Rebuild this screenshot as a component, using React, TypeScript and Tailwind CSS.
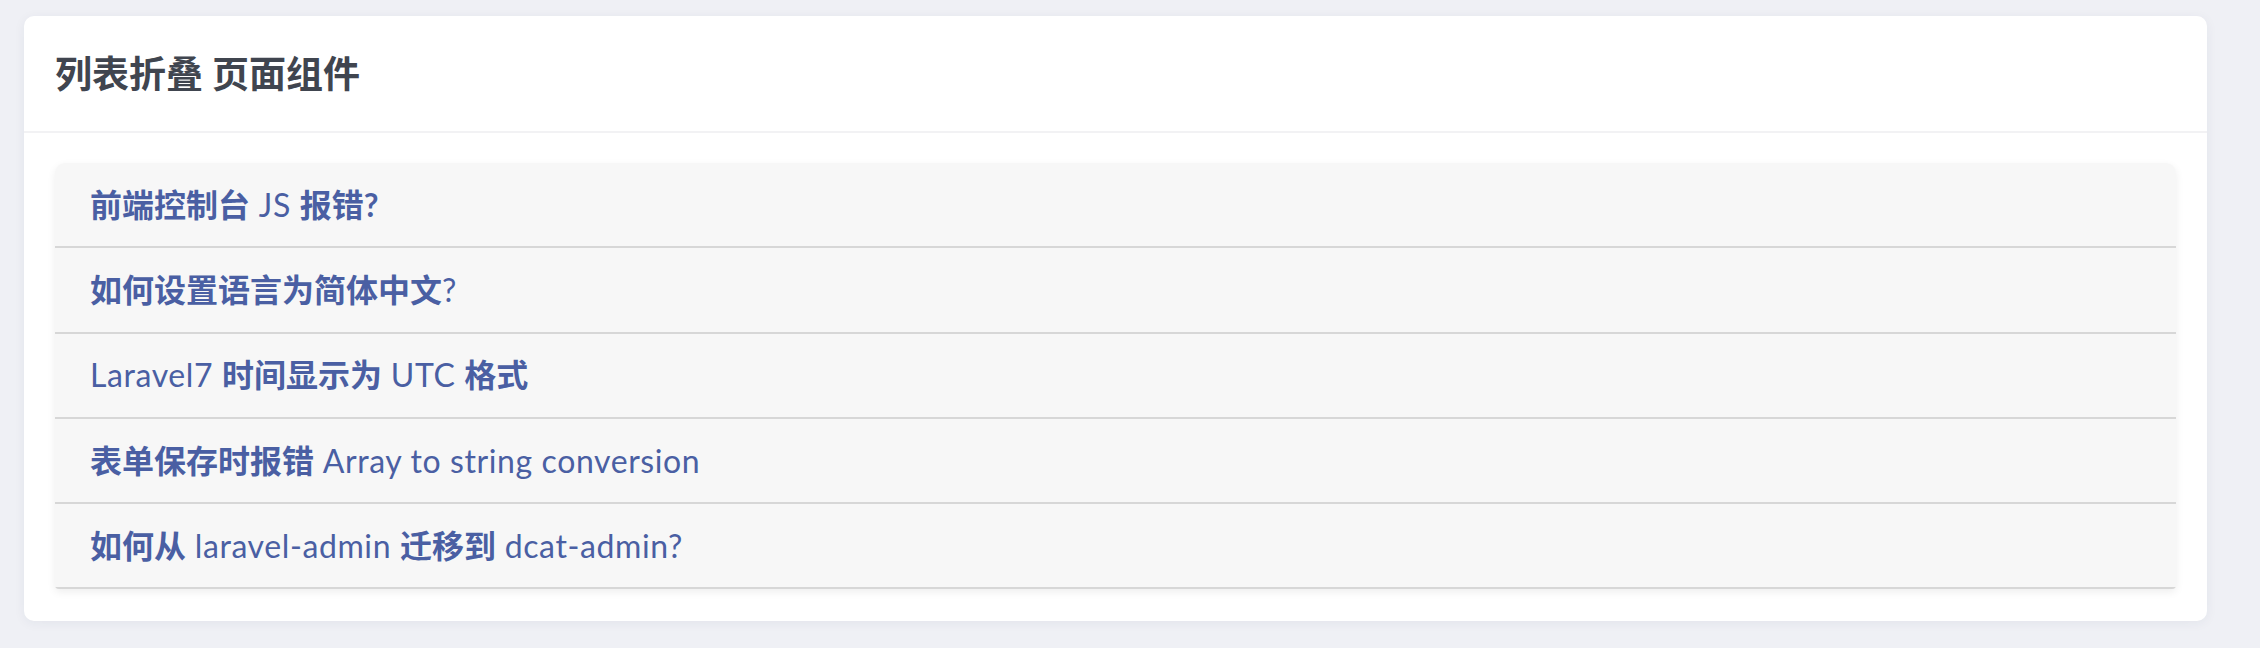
const FONT = '"Lato", "Noto Sans CJK SC", sans-serif';

type Seg = { t: string; b?: boolean };

const ROWS: Seg[][] = [
  [{ t: "前端控制台", b: true }, { t: " JS " }, { t: "报错?", b: true }],
  [{ t: "如何设置语言为简体中文", b: true }, { t: "?" }],
  [{ t: "Laravel7 " }, { t: "时间显示为", b: true }, { t: " UTC " }, { t: "格式", b: true }],
  [{ t: "表单保存时报错", b: true }, { t: " Array to string conversion" }],
  [{ t: "如何从", b: true }, { t: " laravel-admin " }, { t: "迁移到", b: true }, { t: " dcat-admin?" }],
];

export default function App() {
  return (
    <div className="min-h-screen bg-[#eff0f5] pt-[16px] pb-[26px]" style={{ fontFamily: FONT }}>
      <div className="ml-[24px] mr-[53px] rounded-[10px] bg-white shadow-[0_2px_12px_rgba(40,45,80,0.06)]">
        {/* header */}
        <div className="flex h-[117px] items-center border-b-2 border-[#f2f2f4] pl-[31px]">
          <h1 className="text-[37px] font-bold leading-none text-[#40454f]">列表折叠 页面组件</h1>
        </div>

        {/* body */}
        <div className="px-[31px] pt-[30px] pb-[32px]">
          <div className="overflow-hidden rounded-t-[10px] rounded-b-[4px] bg-[#f7f7f7] shadow-[0_3px_8px_rgba(0,0,0,0.07)]">
            {ROWS.map((row, i) => (
              <div
                key={i}
                className="flex h-[85.3px] items-center border-b-2 border-[#d7d7d7] pl-[35px] text-[32px] leading-none text-[#4a5fa3]"
              >
                <span className="whitespace-pre">
                  {row.map((s, j) => (
                    <span key={j} className={s.b ? "font-bold" : "font-normal tracking-[0.6px]"}>
                      {s.t}
                    </span>
                  ))}
                </span>
              </div>
            ))}
          </div>
        </div>
      </div>
    </div>
  );
}
